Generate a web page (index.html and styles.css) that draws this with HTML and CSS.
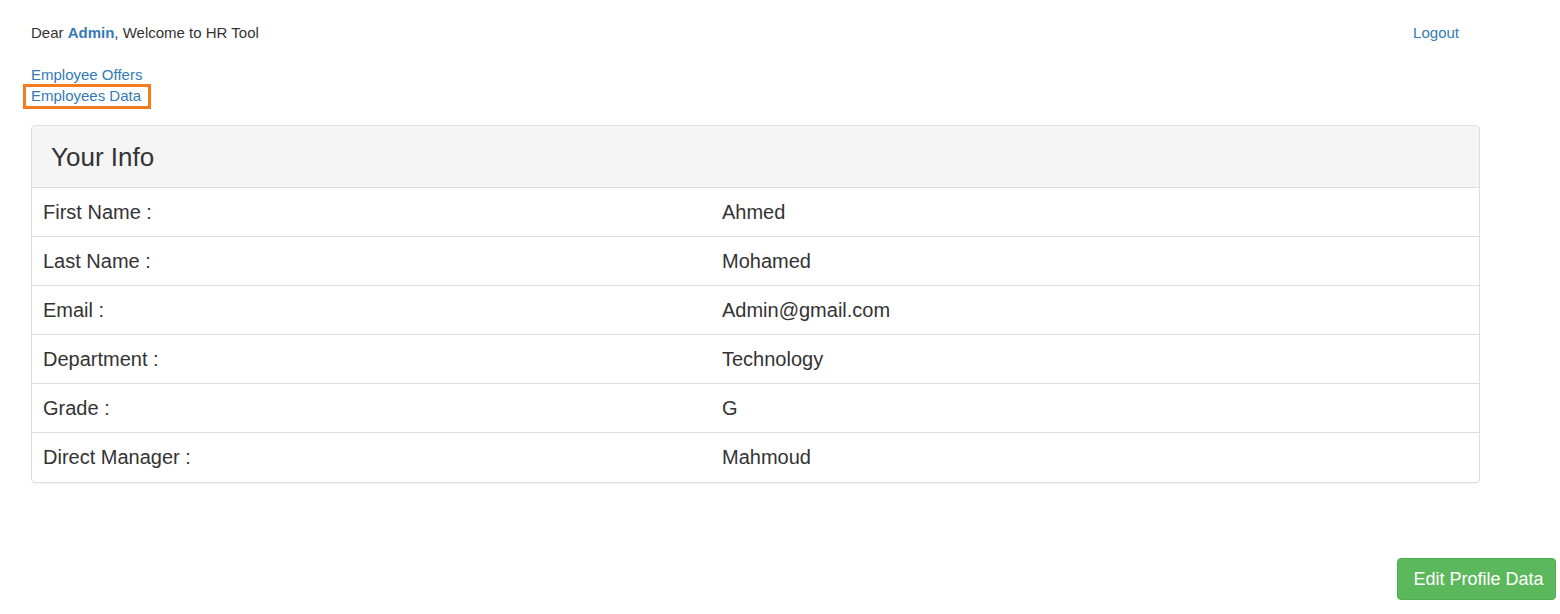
FILE: index.html
```html
<!DOCTYPE html>
<html>
<head>
<meta charset="utf-8">
<link rel="stylesheet" href="styles.css">
<title>HR Tool</title>
</head>
<body>
<div class="page">
  <div class="topbar">
    <div class="greeting">Dear <a class="strong-link" href="#">Admin</a>, Welcome to HR Tool</div>
    <a class="link" href="#">Logout</a>
  </div>
  <nav class="nav">
    <a class="link" href="#">Employee Offers</a>
    <a class="link highlighted" href="#">Employees Data</a>
  </nav>
  <section class="panel">
    <div class="panel-heading">Your Info</div>
    <div class="info-table">
      <div class="row"><div class="cell">First Name :</div><div class="cell">Ahmed</div></div>
      <div class="row"><div class="cell">Last Name :</div><div class="cell">Mohamed</div></div>
      <div class="row"><div class="cell">Email :</div><div class="cell">Admin@gmail.com</div></div>
      <div class="row"><div class="cell">Department :</div><div class="cell">Technology</div></div>
      <div class="row"><div class="cell">Grade :</div><div class="cell">G</div></div>
      <div class="row"><div class="cell">Direct Manager :</div><div class="cell">Mahmoud</div></div>
    </div>
  </section>
</div>
<div class="actions">
  <button class="btn-success" type="button">Edit Profile Data</button>
</div>
</body>
</html>
```
FILE: styles.css
```css
html, body {
  margin: 0;
  padding: 0;
  background: #fff;
}
body {
  font-family: "Liberation Sans", Arial, Helvetica, sans-serif;
  font-size: 15px;
  line-height: 20px;
  color: #333;
}
.page {
  width: 1449px;
  padding: 23px 0 0 31px;
}
.topbar {
  display: flex;
  justify-content: space-between;
  padding-right: 21px;
}
.link, .strong-link {
  color: #337ab7;
  text-decoration: none;
}
.strong-link {
  font-weight: bold;
}
.nav {
  display: flex;
  flex-direction: column;
  align-items: flex-start;
  margin-top: 22px;
  gap: 1px;
}
.highlighted {
  position: relative;
}
.highlighted::after {
  content: "";
  position: absolute;
  left: -8px;
  right: -10px;
  top: -2px;
  bottom: -3px;
  border: 3px solid #f47b20;
}
.panel {
  margin-top: 19px;
  border: 1px solid #ddd;
  border-radius: 4px;
  box-shadow: 0 1px 1px rgba(0,0,0,0.05);
  overflow: hidden;
}
.panel-heading {
  background: #f5f5f5;
  border-bottom: 1px solid #ddd;
  padding: 17px 19px 15px;
  font-size: 26px;
  line-height: 29px;
  color: #333;
}
.row {
  display: grid;
  grid-template-columns: 679px 1fr;
  border-top: 1px solid #ddd;
}
.row:first-child {
  border-top: none;
}
.row:last-child .cell {
  padding-bottom: 13px;
}
.cell {
  padding: 12px 11px;
  font-size: 20px;
  line-height: 24px;
}
.actions {
  display: flex;
  justify-content: flex-end;
  padding: 75px 4px 0 0;
}
.btn-success {
  box-sizing: border-box;
  background: #5cb85c;
  border: 1px solid #4cae4c;
  border-radius: 4px;
  color: #fff;
  font-family: "Liberation Sans", Arial, Helvetica, sans-serif;
  font-size: 18px;
  line-height: 24px;
  padding: 0 8px 0 12px;
  width: 159px;
  height: 42px;
  white-space: nowrap;
  cursor: pointer;
}
```
